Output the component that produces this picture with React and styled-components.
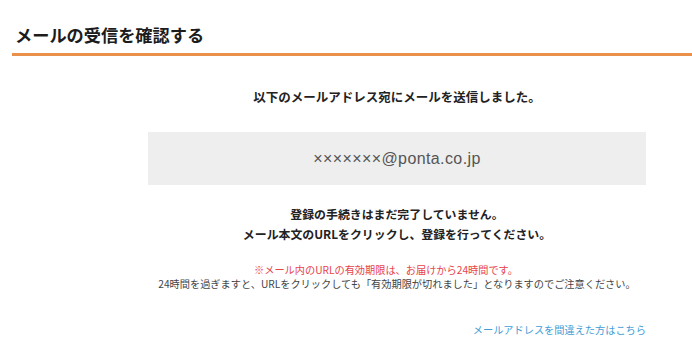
import styled, { createGlobalStyle } from "styled-components";

const GlobalStyle = createGlobalStyle`
  body {
    margin: 0;
    background: #ffffff;
    font-family: "Noto Sans CJK JP", "Noto Sans", sans-serif;
    color: #222222;
  }
`;

const StyledPage = styled.div`
  width: 692px;
  height: 358px;
  overflow: hidden;
  background: #ffffff;
`;
const StyledHeader = styled.div`
  margin-left: 12px;
  padding: 24px 0 7px 3px;
  border-bottom: 3px solid #e9914b;
`;
const StyledTitle = styled.h1`
  margin: 0;
  font-size: 17.2px;
  line-height: 22px;
  font-weight: bold;
  color: #1c1c1c;
`;
const StyledBody = styled.div`
  padding: 0 46px 0 148px;
  display: flex;
  flex-direction: column;
  align-items: center;
`;
const StyledLead = styled.p`
  margin: 33px 0 0;
  font-size: 12.5px;
  line-height: 16px;
  font-weight: bold;
`;
const StyledMailBox = styled.div`
  align-self: stretch;
  margin-top: 27px;
  height: 53px;
  background: #eeeeee;
  display: flex;
  align-items: center;
  justify-content: center;
  font-family: "Liberation Sans", "Noto Sans", sans-serif;
  font-size: 16px;
  letter-spacing: 0.4px;
  color: #555555;
`;
const StyledNotice = styled.p`
  margin: 19px 0 0;
  font-size: 11.9px;
  line-height: 20px;
  font-weight: bold;
  text-align: center;
`;
const StyledNote = styled.p`
  margin: ${(p) => (p.$first ? "19px" : "0")} 0 0;
  padding-right: ${(p) => (p.$warn ? "22px" : "0")};
  font-size: 10.2px;
  line-height: 14px;
  text-align: center;
  white-space: nowrap;
  color: ${(p) => (p.$warn ? "#e8434a" : "#444444")};
`;
const StyledLink = styled.a`
  align-self: flex-end;
  margin-top: 32px;
  font-size: 10.2px;
  line-height: 14px;
  color: #3f9dd6;
  text-decoration: none;
  cursor: pointer;
`;

const App = () => {
  return (
    <>
      <GlobalStyle />
      <StyledPage>
        <StyledHeader>
          <StyledTitle>メールの受信を確認する</StyledTitle>
        </StyledHeader>
        <StyledBody>
          <StyledLead>以下のメールアドレス宛にメールを送信しました。</StyledLead>
          <StyledMailBox>×××××××@ponta.co.jp</StyledMailBox>
          <StyledNotice>
            登録の手続きはまだ完了していません。
            <br />
            メール本文のURLをクリックし、登録を行ってください。
          </StyledNotice>
          <StyledNote $first $warn>
            ※メール内のURLの有効期限は、お届けから24時間です。
          </StyledNote>
          <StyledNote>
            24時間を過ぎますと、URLをクリックしても「有効期限が切れました」となりますのでご注意ください。
          </StyledNote>
          <StyledLink>メールアドレスを間違えた方はこちら</StyledLink>
        </StyledBody>
      </StyledPage>
    </>
  );
};
export default App;
